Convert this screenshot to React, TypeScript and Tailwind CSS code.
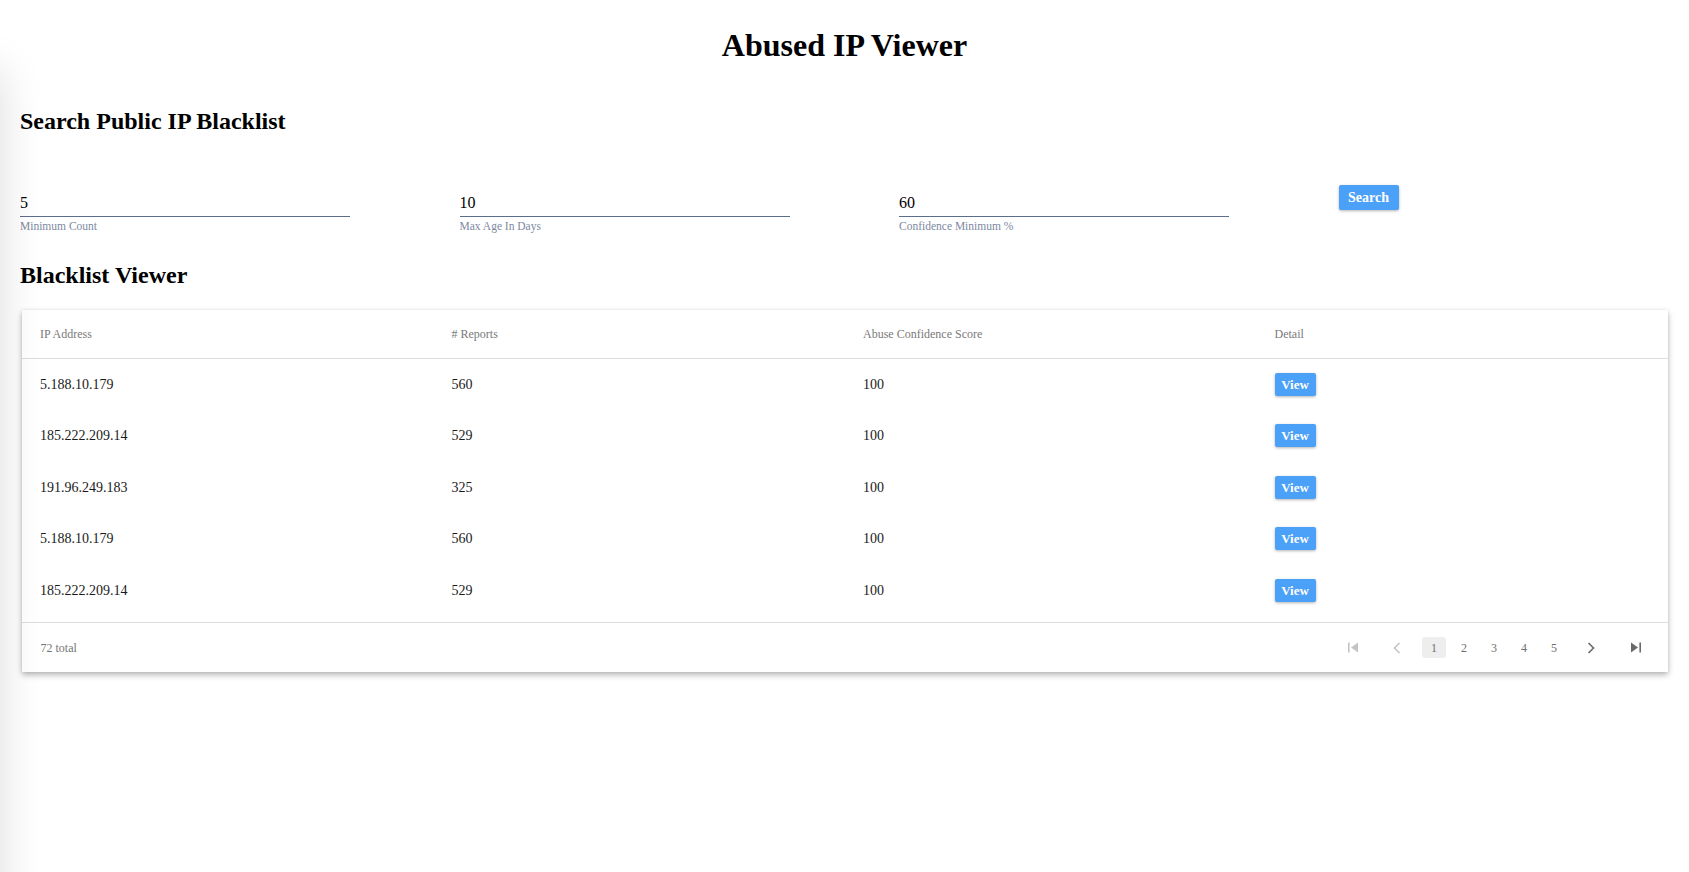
const rows = [
  { ip: "5.188.10.179", reports: 560, score: 100 },
  { ip: "185.222.209.14", reports: 529, score: 100 },
  { ip: "191.96.249.183", reports: 325, score: 100 },
  { ip: "5.188.10.179", reports: 560, score: 100 },
  { ip: "185.222.209.14", reports: 529, score: 100 },
];

function Field({ value, label }: { value: string; label: string }) {
  return (
    <div className="w-[330px] flex flex-col">
      <div className="h-[25px] flex items-end pb-[5px] border-b border-[#5d6d8e] text-[16px] text-black leading-none">
        {value}
      </div>
      <div className="mt-[4px] text-[11.5px] text-[#7c89a2] leading-none">{label}</div>
    </div>
  );
}

function SkipIcon({ flip, color }: { flip?: boolean; color: string }) {
  return (
    <svg width="11" height="11" viewBox="0 0 11 11" className={flip ? "rotate-180" : ""}>
      <rect x="0" y="0.5" width="1.6" height="10" fill={color} />
      <path d="M10 0.5 L3 5.5 L10 10.5 Z" fill={color} />
    </svg>
  );
}

function Chevron({ flip, color }: { flip?: boolean; color: string }) {
  return (
    <svg width="8" height="12" viewBox="0 0 8 12" className={flip ? "rotate-180" : ""}>
      <path d="M6.5 1 L1.5 6 L6.5 11" stroke={color} strokeWidth="1.6" fill="none" />
    </svg>
  );
}

export default function App() {
  return (
    <div className="relative min-h-[872px] bg-white overflow-hidden font-['Liberation_Serif','Times_New_Roman',serif] text-black">
      <div className="absolute left-[-100px] top-[70px] w-[100px] h-[900px] shadow-[0_0_45px_rgba(0,0,0,0.14)]"></div>
      <div className="px-[20px] pt-[27px]">
        <h1 className="text-center text-[32px] font-bold leading-[37px]">Abused IP Viewer</h1>
        <h2 className="mt-[43px] text-[24px] font-bold leading-[28px]">Search Public IP Blacklist</h2>
        <div className="mt-[57px] flex items-start gap-[109.5px]">
          <Field value="5" label="Minimum Count" />
          <Field value="10" label="Max Age In Days" />
          <Field value="60" label="Confidence Minimum %" />
          <button className="mt-[-7px] w-[60px] h-[25px] rounded-[2px] bg-[#4ba0f7] text-white font-bold text-[14px] shadow-[0_1px_3px_rgba(0,0,0,0.3)]">
            Search
          </button>
        </div>
        <h2 className="mt-[28px] text-[24px] font-bold leading-[28px]">Blacklist Viewer</h2>
        <div className="mt-[21px] ml-[1.5px] w-[1646px] bg-white shadow-[0_3px_6px_rgba(0,0,0,0.28),0_0_3px_rgba(0,0,0,0.08)]">
          <div className="grid grid-cols-4 h-[49px] items-center border-b border-[#dedede] text-[12px] text-[#7a7a7a]">
            <div className="pl-[18.5px]">IP Address</div>
            <div className="pl-[18.5px]">&#35; Reports</div>
            <div className="pl-[18.5px]">Abuse Confidence Score</div>
            <div className="pl-[18.5px]">Detail</div>
          </div>
          <div className="pb-[6px]">
            {rows.map((r, i) => (
              <div key={i} className="grid grid-cols-4 h-[51.5px] items-center text-[14px] text-[#1a1a1a]">
                <div className="pl-[18.5px]">{r.ip}</div>
                <div className="pl-[18.5px]">{r.reports}</div>
                <div className="pl-[18.5px]">{r.score}</div>
                <div className="pl-[18.5px]">
                  <button className="w-[41px] h-[23px] rounded-[2px] bg-[#4ba0f7] text-white font-bold text-[13px] shadow-[0_1px_3px_rgba(0,0,0,0.3)]">
                    View
                  </button>
                </div>
              </div>
            ))}
          </div>
          <div className="h-[50px] border-t border-[#dedede] flex items-center justify-between pl-[19px] pr-[20.5px]">
            <div className="text-[12px] text-[#757575]">72 total</div>
            <div className="flex items-center text-[12px] text-[#6f6f6f]">
              <div className="w-[24px] flex justify-center"><SkipIcon color="#c4c4c4" /></div>
              <div className="w-[20px]"></div>
              <div className="w-[24px] flex justify-center"><Chevron color="#c4c4c4" /></div>
              <div className="w-[1px]"></div>
              <div className="ml-[12px] w-[24px] h-[21px] rounded-[3px] bg-[#eeeeee] flex items-center justify-center">1</div>
              <div className="ml-[6px] w-[24px] flex justify-center">2</div>
              <div className="ml-[6px] w-[24px] flex justify-center">3</div>
              <div className="ml-[6px] w-[24px] flex justify-center">4</div>
              <div className="ml-[6px] w-[24px] flex justify-center">5</div>
              <div className="ml-[13px] w-[24px] flex justify-center"><Chevron flip color="#6a6a6a" /></div>
              <div className="ml-[20px] w-[24px] flex justify-center"><SkipIcon flip color="#6a6a6a" /></div>
            </div>
          </div>
        </div>
      </div>
    </div>
  );
}
